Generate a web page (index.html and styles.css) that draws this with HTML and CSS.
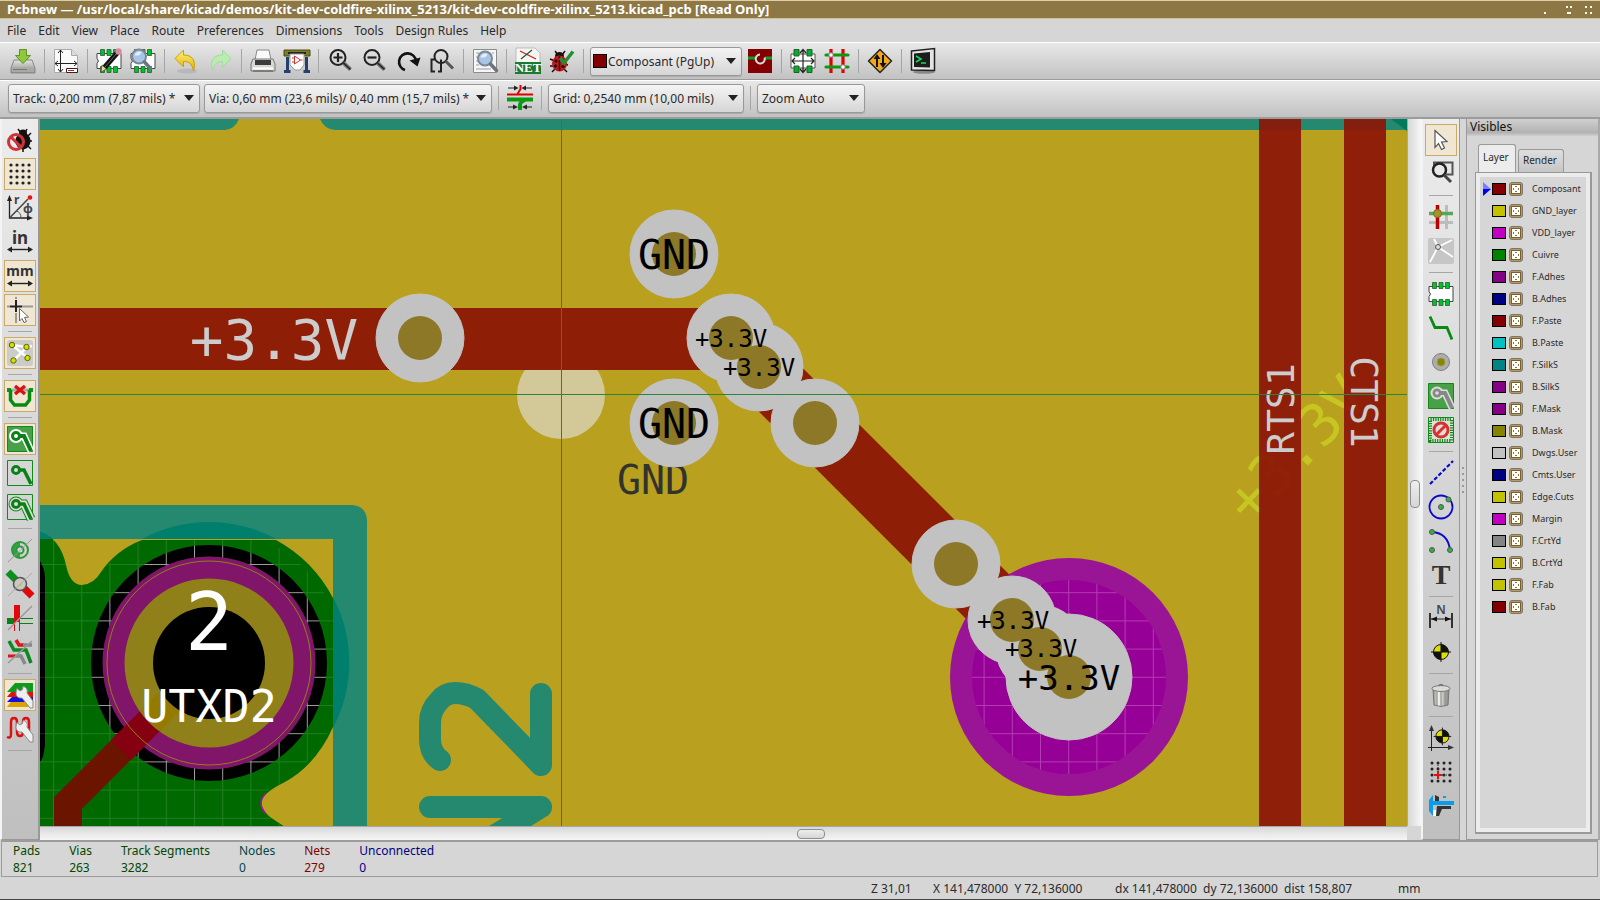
FILE: index.html
```html
<!DOCTYPE html>
<html lang="en">
<head>
<meta charset="utf-8">
<title>Pcbnew</title>
<link rel="stylesheet" href="styles.css">
</head>
<body>
<svg class="defs" aria-hidden="true">
  <defs>
    <linearGradient id="gold" x1="0" y1="0" x2="0" y2="1"><stop offset="0" stop-color="#fff27a"/><stop offset="1" stop-color="#e0ac00"/></linearGradient>
    <linearGradient id="metal" x1="0" y1="0" x2="0" y2="1"><stop offset="0" stop-color="#e4e4e0"/><stop offset="1" stop-color="#8b8b88"/></linearGradient>
    <linearGradient id="can" x1="0" y1="0" x2="1" y2="0"><stop offset="0" stop-color="#8e8e88"/><stop offset=".35" stop-color="#f2f2ee"/><stop offset="1" stop-color="#85857f"/></linearGradient>
    <g id="lens"><circle cx="11" cy="9.500" r="7" fill="#a9c5e6" stroke="#7c8794" stroke-width="2"/><path d="M6.500 8.500a5 5 0 0 1 7-3.500c-1 3-3 4-7 3.500z" fill="#e3eefa"/><path d="M16.500 15l6 6.500" stroke="#6b7480" stroke-width="3.500" stroke-linecap="round"/></g>
    <g id="chip"><path d="M1 5.500h24v15H1v-5q3-2.500 0-5z" fill="#fff" stroke="#444"/><g fill="#00c22b" stroke="#2c5c35" stroke-width=".8"><path d="M4.500 1.500h4v6h-4zM11 1.500h4v6h-4zM17.500 1.500h4v6h-4zM4.500 18.500h4v6h-4zM11 18.500h4v6h-4zM17.500 18.500h4v6h-4z"/></g></g>
    <g id="wrench"><path d="M10 6.500l3 2.500 2.500-1.500.5-3c3.500.5 5 3.500 4 6.500l6 8v7h-3l-8-10c-3.500.5-6-1.500-6-4.500 0-2 .3-3.500 1-5z" fill="#eee" stroke="#8a8a8a"/></g>
    <g id="target"><circle cx="13" cy="13" r="7.500" fill="#dede00" stroke="#111"/><path d="M13 5.500V13h7.500A7.500 7.500 0 0 0 13 5.500zM13 20.500V13H5.500a7.500 7.500 0 0 0 7.500 7.500z" fill="#111"/><path d="M13 3v20M3 13h20" stroke="#111"/></g>
  </defs>
</svg>

<header class="titlebar">
  <h1>Pcbnew — /usr/local/share/kicad/demos/kit-dev-coldfire-xilinx_5213/kit-dev-coldfire-xilinx_5213.kicad_pcb [Read Only]</h1>
  <svg class="winctl" width="50" height="14" viewBox="0 0 50 14" fill="#fffbe8"><path d="M0 9h2v2H0zM22 3h2v2h-2zM26 3h2v2h-2zM23 9h4v2h-4zM41 3h2v2h-2zM46 3h2v2h-2zM41 9h2v2h-2zM46 9h2v2h-2z"/></svg>
</header>

<nav class="menubar">
  <button>File</button><button>Edit</button><button>View</button><button>Place</button><button>Route</button><button>Preferences</button><button>Dimensions</button><button>Tools</button><button>Design Rules</button><button>Help</button>
</nav>

<div class="toolbar">
  <button class="tool" aria-label="Save board"><svg viewBox="0 0 26 26"><path d="M4 12h18l3 8v5H1v-5z" fill="url(#metal)" stroke="#888"/><path d="M2 19h22v5H2z" fill="#a9a9a5"/><path d="M3 21.500h14" stroke="#777"/><path d="M9.500 1.500h7v6h4L13 15.500 5.500 7.500h4z" fill="#8fc83b" stroke="#5d9221"/></svg></button>
  <i class="sep"></i>
  <button class="tool" aria-label="Page settings"><svg viewBox="0 0 26 26"><path d="M1.500 1.500h17l6 6v17h-23z" fill="#fafafa" stroke="#aaa"/><path d="M18.500 1.500v6h6" fill="#ddd" stroke="#aaa"/><path d="M7.500 2v22M2 15.500h22M5 5l2.500-3L10 5M5 21l2.500 3 2.500-3M5 13l-3 2.500L5 18M21 13l3 2.500-3 2.500" fill="none" stroke="#222"/><path d="M13.500 20.500h11v4h-11z" fill="#fff" stroke="#3a2020"/><path d="M15 22.500h6" stroke="#b22"/></svg></button>
  <i class="sep"></i>
  <button class="tool" aria-label="Open footprint editor"><svg viewBox="0 0 26 26"><use href="#chip"/><path d="M22 4L8 20" stroke="#111" stroke-width="5"/><path d="M21 5L9 19" stroke="#666" stroke-width="1"/><path d="M6 17l4.500 4L5 24z" fill="#f0d890" stroke="#333" stroke-width=".6"/><circle cx="22.500" cy="3.500" r="3.200" fill="#d88aa0"/></svg></button>
  <button class="tool" aria-label="Open footprint viewer"><svg viewBox="0 0 26 26"><use href="#chip"/><use href="#lens" x="-2" y="-1"/></svg></button>
  <i class="sep"></i>
  <button class="tool" aria-label="Undo"><svg viewBox="0 0 26 26"><ellipse cx="14" cy="23" rx="10" ry="2.500" fill="#999" opacity=".35"/><path d="M10.500 2v5C19 7 23.500 12 20.500 23 19 16 16 13.500 10.500 13.500v5.500L2 10.500z" fill="url(#gold)" stroke="#caa000"/></svg></button>
  <button class="tool" aria-label="Redo"><svg viewBox="0 0 26 26"><path d="M15.500 2v5C7 7 2.500 12 5.500 23 7 16 10 13.500 15.500 13.500v5.500L24 10.500z" fill="#b9ecb0" stroke="#a0dc9a"/></svg></button>
  <i class="sep"></i>
  <button class="tool" aria-label="Print board"><svg viewBox="0 0 26 26"><path d="M5 12L7 2h12l2 10z" fill="#fafafa" stroke="#888"/><path d="M3 11h20l2 5v7H1v-7z" fill="#d8d8d6" stroke="#777"/><path d="M5 12h16v5H5z" fill="#3c3c3c"/><path d="M3 19.500h20v2H3z" fill="#fff"/><path d="M3 23h20" stroke="#555"/></svg></button>
  <button class="tool" aria-label="Plot"><svg viewBox="0 0 26 26"><path d="M2 9h3v13h1.500v3H0v-3h2zM21 9h3v13h2v3h-6.500v-3H21z" fill="#24406e"/><path d="M0 2h26v6H0z" fill="#7d7d2c" stroke="#4a4a12"/><path d="M4 5h18" stroke="#222" stroke-width="2"/><path d="M6 6h14v11l-4 5h-5l-5-5z" fill="#fff" stroke="#999"/><path d="M10.500 8v8l6-4zM8 10h2.500M8 14h2.500M16.500 12h2" fill="none" stroke="#c33"/></svg></button>
  <i class="sep"></i>
  <button class="tool" aria-label="Zoom in"><svg viewBox="0 0 26 26" fill="none" stroke="#222"><circle cx="11" cy="9.500" r="7.500" stroke-width="2"/><path d="M16.500 15l7 6.500" stroke="#777" stroke-width="4"/><path d="M16.500 15l7 6.500" stroke-width="1.500"/><path d="M11 5v9M6.500 9.500h9" stroke-width="2.200"/></svg></button>
  <button class="tool" aria-label="Zoom out"><svg viewBox="0 0 26 26" fill="none" stroke="#222"><circle cx="11" cy="9.500" r="7.500" stroke-width="2"/><path d="M16.500 15l7 6.500" stroke="#777" stroke-width="4"/><path d="M16.500 15l7 6.500" stroke-width="1.500"/><path d="M6.500 9.500h9" stroke-width="2.200"/></svg></button>
  <button class="tool" aria-label="Redraw view"><svg viewBox="0 0 26 26"><path d="M10 22A8.500 8.500 0 1 1 21 13" fill="none" stroke="#111" stroke-width="2.600"/><path d="M14.500 12.500l11-3-3 9z" fill="#111"/></svg></button>
  <button class="tool" aria-label="Zoom auto"><svg viewBox="0 0 26 26" fill="none" stroke="#222"><path d="M6 11.500H2.500v12H6M9 23.500h3v-12" stroke-width="2"/><circle cx="12" cy="8.500" r="6.500" stroke-width="2"/><path d="M16.500 13l7.500 7.500" stroke="#555" stroke-width="3"/></svg></button>
  <i class="sep"></i>
  <button class="tool" aria-label="Find"><svg viewBox="0 0 26 26"><path d="M1.500 1.500h23v23h-23z" fill="#f6f6f6" stroke="#8b8b8b"/><path d="M4 5h3M4 9h2M4 13h2M4 17h3M4 21h15M20 5h2" stroke="#bbb" stroke-width="1.500"/><use href="#lens" x="2" y="1"/></svg></button>
  <i class="sep"></i>
  <button class="tool" aria-label="Read netlist"><svg viewBox="0 0 26 26"><path d="M1 0h19l5 5v20H1z" fill="#f6f6f4" stroke="#aaa" stroke-width=".7"/><path d="M5 3l16 8" stroke="#c22" stroke-width="1.300"/><path d="M6 11l11-9" stroke="#2a5a33" stroke-width="1.300"/><path d="M0 14h26v12H0z" fill="#1c7a30"/><text x="13" y="24" class="net-label">NET</text></svg></button>
  <button class="tool" aria-label="Design rules check"><svg viewBox="0 0 26 26"><path d="M6 3l3 4M16 3l-3 4M1 11l5 2M1 18h5M3 24l4-4M18 24l-4-4M19 17l-4-1" stroke="#111" stroke-width="1.500"/><ellipse cx="10.500" cy="8" rx="4.500" ry="4" fill="#111"/><ellipse cx="10.500" cy="15.500" rx="7.500" ry="8" fill="#c6161b"/><path d="M10.500 8v15" stroke="#111" stroke-width="1.500"/><g fill="#111"><circle cx="7" cy="13" r="1.600"/><circle cx="6.500" cy="18" r="1.600"/><circle cx="14" cy="18.500" r="1.600"/></g><path d="M11 10l4 5L24 3.500" fill="none" stroke="#1f9134" stroke-width="3.500"/></svg></button>
  <i class="sep"></i>
  <span class="combo combo-layer"><b class="swatch-lg"></b><select aria-label="Active layer"><option>Composant (PgUp)</option></select></span>
  <button class="tool" aria-label="Layer pair"><svg viewBox="0 0 26 26"><path d="M1 1h24v24H1z" fill="#840000"/><path d="M1 10h7M18 10h7" stroke="#159a2c" stroke-width="3"/><path d="M13 6.500a4.500 4.500 0 1 0 4.500 3" fill="none" stroke="#ddd" stroke-width="2"/></svg></button>
  <i class="sep"></i>
  <button class="tool" aria-label="Footprint mode"><svg viewBox="0 0 26 26"><path d="M1 6h24v14H1z" fill="#fff" stroke="#555"/><path d="M4 1.500h5V8H4zM17 1.500h5V8h-5zM4 18h5v6.500H4zM17 18h5v6.500h-5z" fill="#00b028" stroke="#2a5a33"/><path d="M5 9h16v8H5z" fill="#fff"/><path d="M13 1.500v23M2 13h22M10 5l3-3.500L16 5M10 21l3 3.500 3-3.500M5 10l-3 3 3 3M21 10l3 3-3 3" fill="none" stroke="#222" stroke-width="1.200"/></svg></button>
  <button class="tool" aria-label="Track mode"><svg viewBox="0 0 26 26"><path d="M7 1v24M19 1v24" stroke="#e00000" stroke-width="3.200"/><path d="M2 7h22M2 19h22" stroke="#089a10" stroke-width="3.200" stroke-linecap="round"/><circle cx="7" cy="7" r="2.200" fill="#fff" stroke="#888"/><circle cx="19" cy="19" r="2.200" fill="#fff" stroke="#888"/></svg></button>
  <i class="sep"></i>
  <button class="tool" aria-label="Fast access to FreeROUTE"><svg viewBox="0 0 26 26"><path d="M13 1.500L24.500 13 13 24.500 1.500 13z" fill="#f3a81a" stroke="#222" stroke-width="1.500" stroke-linejoin="round"/><path d="M10 19V10M16 7v9" stroke="#111" stroke-width="2"/><path d="M6.500 11L10 6l3.500 5zM12.500 15l3.500 5 3.500-5z" fill="#111"/></svg></button>
  <i class="sep"></i>
  <button class="tool" aria-label="Scripting console"><svg viewBox="0 0 26 26"><ellipse cx="14" cy="24" rx="11" ry="1.800" fill="#888"/><path d="M1.500 3L24.500 0.500v22L1.500 22z" fill="#e4e4e4" stroke="#222" stroke-width="1.500"/><path d="M4 5.500L20 4v15.500L4 19z" fill="#1a1f1c"/><path d="M6 8l5 3-5 3M11 15h5" fill="none" stroke="#1fd65a" stroke-width="1.600"/></svg></button>
</div>

<div class="toolbar">
  <span class="combo combo-track"><select aria-label="Track width"><option>Track: 0,200 mm (7,87 mils) *</option></select></span>
  <span class="combo combo-via"><select aria-label="Via size"><option>Via: 0,60 mm (23,6 mils)/ 0,40 mm (15,7 mils) *</option></select></span>
  <i class="sep"></i>
  <button class="tool" aria-label="Auto track width"><svg viewBox="0 0 26 26"><path d="M0 9.500h26" stroke="#e00000" stroke-width="2"/><path d="M0 14.500h26" stroke="#089a10" stroke-width="4"/><path d="M13.500 0v4l-3 5" fill="none" stroke="#e00000" stroke-width="2"/><path d="M13 25v-5q0-3 5-5" fill="none" stroke="#089a10" stroke-width="4"/><path d="M1 3h9M16 3h9M1 22h8M17 22h8" stroke="#222"/><path d="M7 .5L11.500 3 7 5.500zM19 .5L14.500 3 19 5.500zM6 19.500l5 2.500-5 2.500zM20 19.500L15 22l5 2.500z" fill="#222"/></svg></button>
  <i class="sep"></i>
  <span class="combo combo-grid"><select aria-label="Grid"><option>Grid: 0,2540 mm (10,00 mils)</option></select></span>
  <i class="sep"></i>
  <span class="combo combo-zoom"><select aria-label="Zoom"><option>Zoom Auto</option></select></span>
</div>

<main class="workspace">
  <div class="sidebar">
    <button class="tool" aria-label="Disable DRC"><svg viewBox="0 0 26 26"><path d="M11 2l3 4M20 2l-2 4M24 6l-3 3M25 14h-4M24 22l-4-4M16 25v-4" stroke="#111" stroke-width="1.500"/><ellipse cx="16" cy="14" rx="7.500" ry="8.500" fill="#111"/><ellipse cx="16" cy="6" rx="4" ry="3.500" fill="#111"/><circle cx="9" cy="15" r="7.500" fill="none" stroke="#cf3338" stroke-width="3"/><path d="M4 10l10 10" stroke="#cf3338" stroke-width="3"/></svg></button>
    <button class="tool on" aria-label="Hide grid"><svg viewBox="0 0 26 26"><path d="M4 4h20M4 10h20M4 16h20M4 22h20" stroke="#222" stroke-width="3.200" stroke-linecap="round" stroke-dasharray="0 6"/></svg></button>
    <button class="tool" aria-label="Polar coordinates"><svg viewBox="0 0 26 26"><path d="M2.500 3v20H23" fill="none" stroke="#222" stroke-width="1.300"/><path d="M0 6l2.500-6L5 6zM20 20.500l6 2.500-6 2.500z" fill="#222"/><path d="M2.500 23L21 4" stroke="#444" stroke-width="1.500"/><path d="M9 16q5 1 5 7" fill="none" stroke="#555"/><circle cx="23" cy="2.500" r="2.300" fill="#e11"/><text x="7" y="9" class="ico-text">r</text><text x="16" y="18" class="ico-text">φ</text></svg></button>
    <button class="tool" aria-label="Units in inches"><svg viewBox="0 0 26 26"><text x="13" y="15" class="unit-text">in</text><path d="M2 20.500h22" stroke="#222" stroke-width="1.400"/><path d="M0 20.500l5-3v6zM26 20.500l-5-3v6z" fill="#222"/></svg></button>
    <button class="tool on" aria-label="Units in millimeters"><svg viewBox="0 0 26 26"><text x="13" y="13" class="unit-text mm">mm</text><path d="M2 20.500h22" stroke="#222" stroke-width="1.400"/><path d="M0 20.500l5-3v6zM26 20.500l-5-3v6z" fill="#222"/></svg></button>
    <button class="tool on" aria-label="Change cursor shape"><svg viewBox="0 0 26 26"><path d="M0 9.500h3M15 9.500h11M9 0v2M9 16v10" stroke="#999" stroke-width="2"/><path d="M9 3v12M3 9.500h12" stroke="#222" stroke-width="2"/><path d="M12.500 11.500l9 8.500-4 .5 2 4-2.500 1-2-4-2.500 2.500z" fill="#fff" stroke="#666"/></svg></button>
    <i class="sep"></i>
    <button class="tool on" aria-label="Show board ratsnest"><svg viewBox="0 0 26 26"><rect width="26" height="26" rx="3" fill="#cbcbc8"/><path d="M5 5l15 2 5-1M5 5l16 13M20 7L7 20" stroke="#fff" stroke-width="2.500"/><g fill="#d5e000" stroke="#5a6400"><circle cx="5" cy="5" r="2.700"/><circle cx="19.500" cy="7" r="2.700"/><circle cx="20.500" cy="18" r="2.700"/><circle cx="6.500" cy="20.500" r="2.700"/></g></svg></button>
    <i class="sep"></i>
    <button class="tool on" aria-label="Auto delete old track"><svg viewBox="0 0 26 26"><path d="M0 7h4M22 7h4" stroke="#089a10" stroke-width="4"/><path d="M4 7h18" stroke="#aaa" stroke-width="3"/><path d="M3.500 7v10l4 5h11l4-5V7" fill="none" stroke="#088c10" stroke-width="3.500"/><path d="M8 3l10 8M18 3L8 11" stroke="#d81212" stroke-width="3.500"/></svg></button>
    <i class="sep"></i>
    <button class="tool on" aria-label="Show filled zones"><svg viewBox="0 0 26 26"><path d="M.5.500h25v25H.5z" fill="#48a048" stroke="#118a18"/><path d="M9 10h8l7 15" fill="none" stroke="#fff" stroke-width="7"/><circle cx="9" cy="10" r="7" fill="#fff"/><path d="M9 10h8l7 15" fill="none" stroke="#0b8018" stroke-width="4"/><circle cx="9" cy="10" r="5" fill="#0b8018"/><circle cx="9" cy="10" r="2" fill="#fff"/></svg></button>
    <button class="tool" aria-label="Do not show filled zones"><svg viewBox="0 0 26 26"><path d="M.5.500h25v25H.5z" fill="none" stroke="#118a18"/><path d="M9 10h8l7 14" fill="none" stroke="#0b8018" stroke-width="3.500"/><circle cx="9" cy="10" r="3.500" fill="#ddd" stroke="#0b8018" stroke-width="3"/></svg></button>
    <button class="tool" aria-label="Show outlines of zones"><svg viewBox="0 0 26 26"><path d="M.5.500h25v25H.5z" fill="none" stroke="#118a18"/><path d="M9 10h8l7 15" fill="none" stroke="#118a18" stroke-width="9"/><circle cx="9" cy="10" r="7.500" fill="#118a18"/><path d="M9 10h8l7 15" fill="none" stroke="#ddd" stroke-width="7"/><circle cx="9" cy="10" r="6.500" fill="#ddd"/><path d="M9 10h8l7 15" fill="none" stroke="#0b8018" stroke-width="3.500"/><circle cx="9" cy="10" r="3.500" fill="#ddd" stroke="#0b8018" stroke-width="3"/></svg></button>
    <i class="sep"></i>
    <button class="tool" aria-label="Show pads sketch"><svg viewBox="0 0 26 26"><path d="M13 5a8 8 0 0 0 0 16z" fill="#36a046"/><circle cx="13" cy="13" r="8" fill="none" stroke="#2a9a38" stroke-width="2"/><circle cx="13" cy="13" r="3.500" fill="#ddd" stroke="#2a9a38" stroke-width="2"/><path d="M1 25L25 2" stroke="#999"/></svg></button>
    <button class="tool" aria-label="Show vias sketch"><svg viewBox="0 0 26 26"><path d="M1 1l11 11" stroke="#0b9020" stroke-width="7"/><path d="M14 14l11 11" stroke="#e00808" stroke-width="7"/><circle cx="13" cy="13" r="6.500" fill="#c8c8c4" stroke="#555" stroke-width="1.500"/><path d="M11 15l4-4v4z" fill="#dc2"/><path d="M1 25L25 2" stroke="#aaa"/></svg></button>
    <button class="tool" aria-label="Show tracks sketch"><svg viewBox="0 0 26 26"><path d="M0 16h8" stroke="#0b8018" stroke-width="6"/><path d="M12 13.500h14M12 18.500h14" stroke="#0b8018"/><path d="M10 0v17" stroke="#e00808" stroke-width="6"/><path d="M7.500 17v9M12.500 17v9" stroke="#e00808"/><path d="M1 25L25 1" stroke="#999" stroke-width="1.500"/></svg></button>
    <button class="tool" aria-label="High contrast mode"><svg viewBox="0 0 26 26"><path d="M9 1l3 5h5" fill="none" stroke="#d8181c" stroke-width="3.500"/><path d="M16 6h9M7 17h7l4 8" fill="none" stroke="#888" stroke-width="3.500"/><path d="M1 17h7" stroke="#d8181c" stroke-width="3"/><path d="M2 2l5 9h12l5 13" fill="none" stroke="#0b8a20" stroke-width="3.500"/><path d="M1 24L25 2" stroke="#999" stroke-width="1.500"/></svg></button>
    <i class="sep"></i>
    <button class="tool on" aria-label="Layers manager"><svg viewBox="0 0 26 26"><path d="M6 17h20v8H0z" fill="#d9a400"/><path d="M6 14h20v6H0z" fill="#1212d8"/><path d="M6 8h20v7H0z" fill="#e01010"/><path d="M8 1h18v9H0z" fill="#109a1c"/><use href="#wrench"/></svg></button>
    <button class="tool" aria-label="Microwave tools"><svg viewBox="0 0 26 26"><path d="M0 21q4 2 4-3V6q0-4 3-4t3 4v10q0 4 3 4t3-4V6q0-4 3-4t3 4v15" fill="none" stroke="#dd1010" stroke-width="2.500"/><use href="#wrench"/></svg></button>
    <i class="sep"></i>
  </div>

  <section class="editor">
    <div class="view">
      <svg class="board" viewBox="40 119 1367 707" preserveAspectRatio="xMinYMin slice" role="img" aria-label="Printed circuit board">
        <defs>
          <pattern id="grid" x="53" y="564" width="28.200" height="28.200" patternUnits="userSpaceOnUse"><path d="M.5 0v28.200M0 .5h28.200" stroke="#fff" fill="none"/></pattern>
          <clipPath id="pour"><path d="M40 532Q60 538 66 565Q70 585 82 585Q94 584 101 572A140 140 0 1 1 268 791Q255 805 268 817L285 827H40z"/></clipPath>
        </defs>
        <path class="bg" d="M40 119h1367v707H40z"/>
        <text class="net yellow" x="0" y="20" transform="translate(1296 449) rotate(-46)">+3.3V</text>
        <path class="silk" d="M40 119h199q-4 10-14 11H40zM320 119h1087v11H335q-11-1-15-11z"/>
        <path d="M1391 119h16v12z" fill="#007a5c"/>

        <path class="silk" d="M40 505h313q14 2 14 16v305h-34V539H40z"/>
        <path class="silkline" d="M541 694v71L477 699q-11-6-22-6-10 0-16 8-9 9-9 22v16q0 14 10 21M430 807h111l-52 32"/>

        <path d="M40 532Q60 538 66 565Q70 585 82 585Q94 584 101 572Q116 550 142 540H276A140 140 0 0 1 333 598V727Q316 765 285 782Q262 793 261 803Q262 810 270 817L285 827H40z" fill="#006a00"/>
        <path d="M142 539A140 140 0 0 1 276 539zM333 597A140 140 0 0 1 333 728zM40 532q7 1 12 7H40z" fill="#00806c"/>
        <path d="M266 793q-10 10 0 21" fill="none" stroke="#a010a0" stroke-width="1.500"/>
        <path d="M40 561q5 8 5 18v165q-1 14-5 18z" fill="#000"/>
        <path d="M40 540h293v286H40z" fill="url(#grid)" opacity=".13" clip-path="url(#pour)"/>
        <circle cx="209" cy="663" r="118" fill="#000"/>
        <circle cx="209" cy="663" r="118" fill="url(#grid)" opacity=".62"/>
        <path d="M68 827v-24l100-100" fill="none" stroke="#6b1500" stroke-width="28"/>
        <circle cx="209" cy="663" r="106.500" fill="#80156a"/>
        <path d="M121 750l50-50" stroke="#850010" stroke-width="28"/>
        <circle cx="209" cy="663" r="102" fill="none" stroke="#90801a"/>
        <circle cx="209" cy="663" r="84.500" fill="#90801a"/>
        <path d="M150 721l22-22" stroke="#957a00" stroke-width="28"/>
        <circle cx="209" cy="663" r="56" fill="#000"/>
        <text class="net white pin" x="209" y="650">2</text>
        <text class="net white pad" x="209" y="722">UTXD2</text>

        <circle cx="561" cy="395" r="44" fill="#d2c898"/>
        <g class="track"><path d="M1259 119h42v707h-42zM1344 119h42v707h-42z"/></g>
        <path d="M40 339h690l304 304" fill="none" stroke="#8f1e07" stroke-width="62"/>
        <circle cx="1069" cy="677" r="119" fill="#9a1596"/>
        <circle cx="1069" cy="677" r="97" fill="#970097"/>
        <circle cx="1069" cy="677" r="97" fill="url(#grid)" opacity=".24"/>
        <text class="net ghost gnd" x="653" y="494">GND</text>
        <g class="via"><circle cx="420" cy="338" r="44"/><circle cx="674" cy="254" r="44"/><circle cx="674" cy="423" r="44"/><circle cx="731" cy="338" r="44"/><circle cx="759" cy="367" r="44"/><circle cx="815" cy="423" r="44"/><circle cx="956" cy="564" r="44"/><circle cx="1012" cy="620" r="44"/><circle cx="1040" cy="649" r="44"/><circle cx="1069" cy="677" r="63"/></g>
        <g class="hole"><circle cx="420" cy="338" r="22"/><circle cx="674" cy="254" r="22"/><circle cx="674" cy="423" r="22"/><circle cx="731" cy="338" r="22"/><circle cx="759" cy="367" r="22"/><circle cx="815" cy="423" r="22"/><circle cx="956" cy="564" r="22"/><circle cx="1012" cy="620" r="22"/><circle cx="1040" cy="649" r="22"/><circle cx="1069" cy="677" r="22"/></g>
        <text class="net gnd" x="674" y="269">GND</text>
        <text class="net gnd" x="674" y="438">GND</text>
        <text class="net small" x="731" y="347">+3.3V</text>
        <text class="net small" x="759" y="376">+3.3V</text>
        <text class="net small" x="1013" y="629">+3.3V</text>
        <text class="net small" x="1041" y="657">+3.3V</text>
        <text class="net medium" x="1069" y="690">+3.3V</text>
        <text class="net label" x="274" y="359">+3.3V</text>
        <text class="net side" transform="translate(1294 409) rotate(-90)">RTS1</text>
        <text class="net side" transform="translate(1351 402) rotate(90)">CTS1</text>
        <path d="M561.500 119v707M40 394.500h1367" stroke="#2a843c"/>
      </svg>
      <div class="vscroll"><i class="thumb"></i></div>
    </div>
    <div class="hscroll"><i class="thumb"></i></div>
  </section>

  <div class="sidebar">
    <button class="tool on" aria-label="Select"><svg viewBox="0 0 26 26"><path d="M7 3.500l12 11-5.500.5 3 6-3 1.500-3-6-3.500 4z" fill="#fff" stroke="#555" stroke-width="1.200"/></svg></button>
    <button class="tool" aria-label="Zoom to selection"><svg viewBox="0 0 26 26" fill="none"><path d="M6 6V1.500h18.500v12H18" stroke="#555" stroke-width="2"/><circle cx="11.500" cy="9" r="6.500" stroke="#222" stroke-width="2.500"/><path d="M16 14l7 7" stroke="#444" stroke-width="3"/></svg></button>
    <i class="sep"></i>
    <button class="tool" aria-label="Highlight net"><svg viewBox="0 0 26 26"><path d="M18.500 1v24M1 18.500h24" stroke="#bcbcbc" stroke-width="3"/><path d="M1 9.500h24" stroke="#55a858" stroke-width="3.500"/><path d="M9.500 1v24" stroke="#c00000" stroke-width="3.500"/><circle cx="9.500" cy="9.500" r="4" fill="#a8902a" stroke="#7e6a18"/></svg></button>
    <button class="tool" aria-label="Display local ratsnest"><svg viewBox="0 0 26 26"><rect width="26" height="26" rx="2" fill="#c6c6c6"/><path d="M10 9L6 1M10 9l14-7M10 9l15 10M10 9L2 24" stroke="#fff" stroke-width="1.800"/><circle cx="10" cy="9" r="2.500" fill="#ddd" stroke="#555"/></svg></button>
    <i class="sep"></i>
    <button class="tool" aria-label="Add footprints"><svg viewBox="0 0 26 26"><use href="#chip"/></svg></button>
    <button class="tool" aria-label="Route tracks"><svg viewBox="0 0 26 26"><path d="M2 1.500l5 11h12l5 12" fill="none" stroke="#088a14" stroke-width="2.800"/></svg></button>
    <button class="tool" aria-label="Add vias"><svg viewBox="0 0 26 26"><circle cx="13" cy="13" r="8.500" fill="#adadad" stroke="#808080"/><circle cx="13" cy="13" r="4" fill="#868600" stroke="#9a9a50"/></svg></button>
    <button class="tool" aria-label="Add filled zones"><svg viewBox="0 0 26 26"><path d="M.5.500h25v25H.5z" fill="#48a048" stroke="#118a18"/><path d="M9 10h8l7 15" fill="none" stroke="#ddd" stroke-width="7"/><circle cx="9" cy="10" r="6.500" fill="#ddd"/><path d="M9 10h8l7 15" fill="none" stroke="#888" stroke-width="4"/><circle cx="9" cy="10" r="4.500" fill="#888"/><circle cx="9" cy="10" r="1.800" fill="#ddd"/></svg></button>
    <button class="tool" aria-label="Add keepout areas"><svg viewBox="0 0 26 26"><path d="M.5.500h25v25H.5z" fill="#d8e4d8" stroke="#118a18"/><path d="M2.500 2.500h21v21h-21z" fill="none" stroke="#118a18" stroke-width="3" stroke-dasharray="1.200 1.200"/><circle cx="13" cy="13" r="7" fill="#e8d8d8" stroke="#d8302e" stroke-width="3"/><path d="M17.500 8.500l-9 9" stroke="#d8302e" stroke-width="3"/></svg></button>
    <i class="sep"></i>
    <button class="tool" aria-label="Add graphic line"><svg viewBox="0 0 26 26"><path d="M2 24L25 1" stroke="#0808d0" stroke-width="2.200" stroke-dasharray="4 2"/></svg></button>
    <button class="tool" aria-label="Add graphic circle"><svg viewBox="0 0 26 26"><circle cx="13" cy="13" r="11.500" fill="none" stroke="#0808d0" stroke-width="1.800"/><g fill="#2ab83a" stroke="#555"><circle cx="13" cy="13" r="2.500"/><circle cx="20.500" cy="5.500" r="2.500"/></g></svg></button>
    <button class="tool" aria-label="Add graphic arc"><svg viewBox="0 0 26 26"><path d="M4 4q16 1 18 18" fill="none" stroke="#0808d0" stroke-width="1.800"/><g fill="#2ab83a" stroke="#555"><circle cx="4" cy="4" r="2.500"/><circle cx="4" cy="22" r="2.500"/><circle cx="22" cy="22" r="2.500"/></g></svg></button>
    <button class="tool" aria-label="Add text"><svg viewBox="0 0 26 26"><text x="13" y="22" class="serif-text">T</text></svg></button>
    <i class="sep"></i>
    <button class="tool" aria-label="Add dimension"><svg viewBox="0 0 26 26"><text x="13" y="9" class="dim-text">N</text><path d="M2 8v15M24 8v15" stroke="#222" stroke-width="1.800"/><path d="M3 14h20" stroke="#222"/><path d="M3 14l6-2.500v5zM23 14l-6-2.500v5z" fill="#111"/></svg></button>
    <button class="tool" aria-label="Add layer alignment target"><svg viewBox="0 0 26 26"><use href="#target"/></svg></button>
    <i class="sep"></i>
    <button class="tool" aria-label="Delete items"><svg viewBox="0 0 26 26"><path d="M5 7h16l-1 16q-7 3-14 0z" fill="url(#can)" stroke="#777"/><path d="M9 10v13M13 10v14M17 10v13" stroke="#8a8a86"/><ellipse cx="13" cy="6.500" rx="9" ry="3" fill="#dcdcd6" stroke="#777"/><path d="M10.500 4q2.500-3 5 0" fill="none" stroke="#777" stroke-width="1.500"/></svg></button>
    <i class="sep"></i>
    <button class="tool" aria-label="Place drill origin"><svg viewBox="0 0 26 26"><path d="M3.500 4v22M0 22.500h22" stroke="#222"/><path d="M1 6l2.500-6L6 6zM20 20l6 2.500-6 2.500z" fill="#333"/><use href="#target" transform="translate(3 0) scale(.88)"/></svg></button>
    <button class="tool" aria-label="Set grid origin"><svg viewBox="0 0 26 26"><path d="M4 4h20M4 10h20M4 16h20M4 22h20" stroke="#222" stroke-width="3" stroke-linecap="round" stroke-dasharray="0 6"/><path d="M10 6v12M6 16h16" stroke="#333" stroke-dasharray="1 1"/><path d="M10 12v8M6 16h8" stroke="#d81414" stroke-width="2"/></svg></button>
    <button class="tool" aria-label="Measure distance"><svg viewBox="0 0 26 26"><path d="M7 2l4 2v4h11v4H7zM9 13h14v3h-9l-3 7H8z" fill="#333"/><path d="M1 7l4-5v6h21v4H5v11l-4-5z" fill="#0a9bea"/><path d="M5 17h3v6H5z" fill="#fff"/><path d="M15 4h3" stroke="#0a9bea" stroke-width="2"/></svg></button>
  </div>

  <div class="sash"><i></i></div>

  <aside class="visibles">
    <h2>Visibles</h2>
    <div class="tabs" role="tablist"><button role="tab" aria-selected="true" class="tab current">Layer</button><button role="tab" class="tab">Render</button></div>
    <div class="tabpage">
      <ul class="layers">
        <li class="active"><b class="sw dred"></b><label><input type="checkbox" checked>Composant</label></li>
        <li><b class="sw yel"></b><label><input type="checkbox" checked>GND_layer</label></li>
        <li><b class="sw mag"></b><label><input type="checkbox" checked>VDD_layer</label></li>
        <li><b class="sw grn"></b><label><input type="checkbox" checked>Cuivre</label></li>
        <li><b class="sw pur"></b><label><input type="checkbox" checked>F.Adhes</label></li>
        <li><b class="sw blu"></b><label><input type="checkbox" checked>B.Adhes</label></li>
        <li><b class="sw dred"></b><label><input type="checkbox" checked>F.Paste</label></li>
        <li><b class="sw cyn"></b><label><input type="checkbox" checked>B.Paste</label></li>
        <li><b class="sw tea"></b><label><input type="checkbox" checked>F.SilkS</label></li>
        <li><b class="sw pur"></b><label><input type="checkbox" checked>B.SilkS</label></li>
        <li><b class="sw pur"></b><label><input type="checkbox" checked>F.Mask</label></li>
        <li><b class="sw olv"></b><label><input type="checkbox" checked>B.Mask</label></li>
        <li><b class="sw lgr"></b><label><input type="checkbox" checked>Dwgs.User</label></li>
        <li><b class="sw blu"></b><label><input type="checkbox" checked>Cmts.User</label></li>
        <li><b class="sw yel"></b><label><input type="checkbox" checked>Edge.Cuts</label></li>
        <li><b class="sw mag"></b><label><input type="checkbox" checked>Margin</label></li>
        <li><b class="sw gry"></b><label><input type="checkbox" checked>F.CrtYd</label></li>
        <li><b class="sw yel"></b><label><input type="checkbox" checked>B.CrtYd</label></li>
        <li><b class="sw yel"></b><label><input type="checkbox" checked>F.Fab</label></li>
        <li><b class="sw dred"></b><label><input type="checkbox" checked>B.Fab</label></li>
      </ul>
    </div>
  </aside>
</main>

<dl class="messages">
  <div class="m-green"><dt>Pads</dt><dd>821</dd></div>
  <div class="m-green"><dt>Vias</dt><dd>263</dd></div>
  <div class="m-green"><dt>Track Segments</dt><dd>3282</dd></div>
  <div class="m-teal"><dt>Nodes</dt><dd>0</dd></div>
  <div class="m-red"><dt>Nets</dt><dd>279</dd></div>
  <div class="m-blue"><dt>Unconnected</dt><dd>0</dd></div>
</dl>

<footer class="statusbar">
  <span class="f-zoom">Z 31,01</span><span class="f-abs">X 141,478000  Y 72,136000</span><span class="f-rel">dx 141,478000  dy 72,136000  dist 158,807</span><span class="f-unit">mm</span>
</footer>
</body>
</html>
```
FILE: styles.css
```css
* { box-sizing: border-box; }
body {
  margin: 0;
  height: 100vh;
  display: flex;
  flex-direction: column;
  overflow: hidden;
  background: #d6d6d6;
  color: #2a2a2a;
  font: 12px/17px "Noto Sans", sans-serif;
  border-bottom: 1px solid #444;
}
button, select, input { font: inherit; color: inherit; margin: 0; }
button { border: 0; padding: 0; background: none; }
.defs { position: absolute; width: 0; height: 0; }

.titlebar {
  height: 19px;
  flex: none;
  display: flex;
  align-items: center;
  justify-content: space-between;
  padding: 0 6px 0 7px;
  background: #8c7745;
  border-top: 1px solid #dccfa8;
  border-bottom: 1px solid #cfc197;
  color: #fff;
}
.titlebar h1 { margin: 0; font-size: 13px; line-height: 17px; font-weight: 700; white-space: nowrap; }

.menubar { height: 23px; flex: none; display: flex; align-items: center; gap: 12px; padding: 0 7px; }

.toolbar {
  height: 38px;
  flex: none;
  display: flex;
  align-items: center;
  gap: 2px;
  padding: 0 7px;
  background: linear-gradient(#e8e8e8, #c2c2c2);
  border-top: 1px solid #fff;
  border-bottom: 1px solid #9c9c9c;
}
.toolbar + .toolbar { height: 39px; border-bottom-width: 2px; padding-bottom: 2px; }
.tool { width: 32px; height: 32px; flex: none; display: flex; align-items: center; justify-content: center; border: 1px solid transparent; }
.tool svg { width: 26px; height: 26px; overflow: visible; }
.tool.on { background: #efe6d3; border-color: #c9aa66; }
.toolbar .sep { width: 7px; height: 24px; flex: none; background: linear-gradient(#a6a6a6, #a6a6a6) 3px 0 / 1px 24px no-repeat; }
.sidebar .sep { width: 24px; height: 7px; flex: none; background: linear-gradient(#a6a6a6, #a6a6a6) 0 3px / 24px 1px no-repeat; }

.combo { position: relative; height: 29px; margin: 0 1px; }
.combo select {
  appearance: none;
  width: 100%;
  height: 29px;
  padding: 0 20px 0 4px;
  border: 1px solid #999;
  border-radius: 3px;
  background: linear-gradient(#f4f4f4, #d6d6d6);
  box-shadow: 0 1px 1px #aaa;
}
.combo::after { content: ""; position: absolute; right: 6px; top: 11px; border: 5px solid transparent; border-top: 6px solid #222; border-bottom: 0; pointer-events: none; }
.combo-layer { width: 152px; margin: 0 0 0 1px; }
.combo-layer select { padding-left: 17px; }
.swatch-lg { position: absolute; left: 3px; top: 7px; width: 14px; height: 14px; background: #840000; border: 1px solid #000; }
.combo-track { width: 192px; }
.combo-via { width: 288px; }
.combo-grid { width: 196px; }
.combo-zoom { width: 108px; }

.net-label { font: 700 13px "Liberation Serif", serif; fill: #fff; text-anchor: middle; }
.ico-text { font: 700 12px "Noto Sans", sans-serif; fill: #444; }
.unit-text { font: 700 17px "Noto Sans", sans-serif; fill: #333; text-anchor: middle; }
.unit-text.mm { font-size: 14px; }
.serif-text { font: 700 28px "Liberation Serif", serif; fill: #333; text-anchor: middle; }
.dim-text { font: 600 12px "Noto Sans", sans-serif; fill: #444; text-anchor: middle; }

.workspace { flex: 1; min-height: 0; display: flex; }
.sidebar {
  width: 39px;
  flex: none;
  display: flex;
  flex-direction: column;
  align-items: center;
  gap: 2px;
  padding-top: 5px;
  background: linear-gradient(#ececec, #bfbfbf);
  border-left: 2px solid #f4f4f4;
  border-right: 1px solid #999;
  border-bottom: 1px solid #999;
}
.sidebar:first-child { width: 40px; border-right-width: 2px; }

.editor { flex: 1; min-width: 0; display: flex; flex-direction: column; }
.view { flex: 1; min-height: 0; display: flex; }
.board { flex: 1; min-width: 0; height: 100%; display: block; }
.vscroll { width: 14px; flex: none; display: flex; flex-direction: column; align-items: center; justify-content: center; padding-top: 42px; background: linear-gradient(90deg, #d8d8d8, #f6f6f6); border-left: 1px solid #a8a8a8; }
.vscroll .thumb { width: 10px; height: 28px; }
.hscroll { height: 14px; flex: none; display: flex; align-items: center; justify-content: center; padding-left: 174px; margin-right: 14px; background: linear-gradient(#d8d8d8, #f6f6f6); border-top: 1px solid #a8a8a8; }
.hscroll .thumb { width: 28px; height: 10px; }
.thumb { border: 1px solid #8e8e8e; border-radius: 4px; background: linear-gradient(#eee, #d6d6d6); }

.bg { fill: #b9a01e; }
.silk { fill: #258970; }
.silkline { fill: none; stroke: #258970; stroke-width: 22; stroke-linecap: round; stroke-linejoin: round; }
.track { fill: #8c1506; fill-opacity: .93; }
.via { fill: #c2c2c2; stroke: #c2c2c2; stroke-width: 1; }
.hole { fill: #8c7826; }
.net { font-family: "DejaVu Sans Mono", monospace; text-anchor: middle; fill: #000; }
.gnd { font-size: 40px; }
.small { font-size: 24px; }
.medium { font-size: 34px; }
.ghost { fill: #33332e; }
.label { font-size: 56px; fill: #ccc; }
.yellow { font-size: 58px; fill: #c6c622; }
.white { fill: #fff; }
.pin { font-size: 80px; }
.pad { font-size: 45px; }
.side { font-size: 38px; fill: #ccc; }

.sash { width: 6px; flex: none; display: flex; align-items: center; justify-content: center; }
.sash i { width: 2px; height: 26px; background: repeating-linear-gradient(#999 0 2px, transparent 2px 6px); }

.visibles { width: 134px; flex: none; display: flex; flex-direction: column; padding: 0 6px 5px 8px; border-left: 1px solid #999; border-right: 2px solid #aaa; border-bottom: 1px solid #999; }
.visibles h2 { margin: 0 -6px 0 -8px; padding: 0 0 0 3px; height: 17px; font-size: 12px; line-height: 15px; font-weight: 400; color: #111; background: linear-gradient(#d0d0d0, #b2b2b2 80%, #d0d0d0); }
.tabs { display: flex; align-items: flex-end; gap: 2px; padding: 8px 0 0 3px; height: 36px; flex: none; }
.tab { height: 23px; padding: 0 4px; font-size: 10px; line-height: 14px; text-align: left; border: 1px solid #999; border-bottom: 0; border-radius: 3px 3px 0 0; background: linear-gradient(#dedede, #c6c6c6); }
.tab:last-child { width: 46px; padding-bottom: 3px; }
.tab.current { width: 38px; height: 29px; background: #ececec; margin-bottom: -1px; padding-bottom: 5px; }
.tabpage { flex: 1; min-height: 0; padding: 4px; background: #ececec; border: 1px solid #999; border-right-width: 2px; border-bottom-width: 2px; }
.layers { height: 100%; margin: 0; padding: 1px 0 0 3px; list-style: none; background: #d6d6d6; font-size: 9px; line-height: 14px; }
.layers li { height: 22px; display: flex; align-items: center; gap: 3px; padding-left: 9px; }
.layers li.active { padding-left: 0; }
.active::before { content: ""; flex: none; width: 8px; height: 14px; margin-right: -2px; background: linear-gradient(#7d7dff 50%, #0000f0 50%); clip-path: polygon(0 0, 100% 50%, 0 100%); }
.layers label { display: flex; align-items: center; gap: 9px; white-space: nowrap; }
.sw { width: 14px; height: 12px; flex: none; border: 1px solid #000; }
.layers input {
  appearance: none;
  width: 14px;
  height: 14px;
  flex: none;
  display: grid;
  place-items: center;
  background: #bb9a57;
  border: 1px solid #777;
  border-radius: 3px;
}
.layers input::before { content: ""; grid-area: 1 / 1; width: 8px; height: 8px; background: #fff; border: 1px solid #7a6026; }
.layers input::after { content: ""; grid-area: 1 / 1; width: 6px; height: 6px; background: linear-gradient(#8a7340, #8a7340) 2px 0 / 2px 1px no-repeat, linear-gradient(#8a7340, #8a7340) 2px 5px / 2px 1px no-repeat, linear-gradient(#8a7340, #8a7340) 0 2px / 1px 2px no-repeat, linear-gradient(#8a7340, #8a7340) 5px 2px / 1px 2px no-repeat; }
.dred { background: #840000; }
.yel { background: #c2c200; }
.mag { background: #c200c2; }
.grn { background: #008400; }
.pur { background: #840084; }
.blu { background: #000084; }
.cyn { background: #00c2c2; }
.tea { background: #008484; }
.olv { background: #848400; }
.lgr { background: #c2c2c2; }
.gry { background: #848484; }

.messages { height: 37px; flex: none; margin: 0 2px 0 1px; padding: 0 11px; display: flex; gap: 29px; border: 1px solid #9c9c9c; border-top-width: 2px; }
.messages dt, .messages dd { margin: 0; }
.m-green { color: #004800; }
.m-teal { color: #004848; }
.m-red { color: #840000; }
.m-blue { color: #000084; }

.statusbar { height: 22px; flex: none; display: flex; align-items: center; justify-content: flex-end; white-space: pre; }
.f-zoom { width: 62px; }
.f-abs { width: 182px; }
.f-rel { width: 283px; }
.f-unit { width: 202px; }
```
